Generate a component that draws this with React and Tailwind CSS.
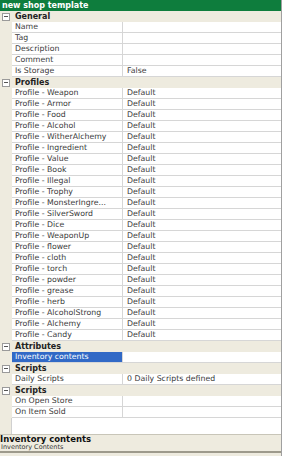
const sections = [
  {
    title: 'General',
    rows: [
      ['Name', ''],
      ['Tag', ''],
      ['Description', ''],
      ['Comment', ''],
      ['Is Storage', 'False'],
    ],
  },
  {
    title: 'Profiles',
    rows: [
      'Weapon', 'Armor', 'Food', 'Alcohol', 'WitherAlchemy', 'Ingredient', 'Value', 'Book',
      'Illegal', 'Trophy', 'MonsterIngre...', 'SilverSword', 'Dice', 'WeaponUp', 'flower',
      'cloth', 'torch', 'powder', 'grease', 'herb', 'AlcoholStrong', 'Alchemy', 'Candy',
    ].map((p) => ['Profile - ' + p, 'Default']),
  },
  { title: 'Attributes', rows: [['Inventory contents', '', true]] },
  { title: 'Scripts', rows: [['Daily Scripts', '0 Daily Scripts defined']] },
  { title: 'Scripts', rows: [['On Open Store', ''], ['On Item Sold', '']] },
];

const MinusBox = () => (
  <div className="w-[8px] h-[8px] border border-[#9a9a9a] bg-white flex items-center justify-center">
    <div className="w-[4px] h-px bg-[#555]" />
  </div>
);

const CategoryRow = ({ title }) => (
  <div className="flex h-[11px] bg-[#eeebdf]">
    <div className="w-[12px] flex items-center justify-center">
      <MinusBox />
    </div>
    <div className="flex-1 pl-[3px] font-bold text-[8px] leading-[11px] text-[#222]">{title}</div>
  </div>
);

const PropRow = ({ name, value, selected }) => (
  <div className="flex h-[11px]">
    <div className="w-[12px] bg-[#eeebdf]" />
    <div
      className={
        'w-[111px] pl-[3px] border-r border-b border-[#d6d6d6] text-[7.8px] leading-[10px] truncate ' +
        (selected ? 'bg-[#3169c6] text-white' : 'bg-white text-[#3a3a3a]')
      }
    >
      {name}
    </div>
    <div className="flex-1 pl-[4px] border-b border-[#d6d6d6] bg-white text-[7.8px] leading-[10px] text-[#3a3a3a] truncate">
      {value}
    </div>
  </div>
);

export default function App() {
  return (
    <div
      className="w-[282px] h-[456px] flex flex-col bg-white overflow-hidden border-r border-[#a0a0a0]"
      style={{ fontFamily: '"DejaVu Sans", Verdana, sans-serif' }}
    >
      {/* title bar */}
      <div className="h-[11px] bg-[#0e7d3d] text-white font-bold text-[8px] leading-[11px] pl-[2px]">
        new shop template
      </div>

      {/* property grid */}
      <div className="flex-1 flex flex-col">
        {sections.map((s, i) => (
          <div key={i}>
            <CategoryRow title={s.title} />
            {s.rows.map((r, j) => (
              <PropRow key={j} name={r[0]} value={r[1]} selected={r[2]} />
            ))}
          </div>
        ))}
        <div className="flex flex-1">
          <div className="w-[12px] bg-[#eeebdf] border-r border-[#d0d0d0]" />
          <div className="flex-1 bg-white" />
        </div>
      </div>

      {/* description panel */}
      <div className="h-[19px] bg-[#eeebdf] border-t border-[#c8c5b8] border-b-2 border-b-[#9d9a8c] flex flex-col">
        <div className="font-bold text-[8.5px] leading-[9px] text-[#111]">Inventory contents</div>
        <div className="text-[6.5px] leading-[7px] pl-[1px] text-[#333]">Inventory Contents</div>
      </div>
      <div className="h-[3px] bg-[#eeebdf]" />
    </div>
  );
}
